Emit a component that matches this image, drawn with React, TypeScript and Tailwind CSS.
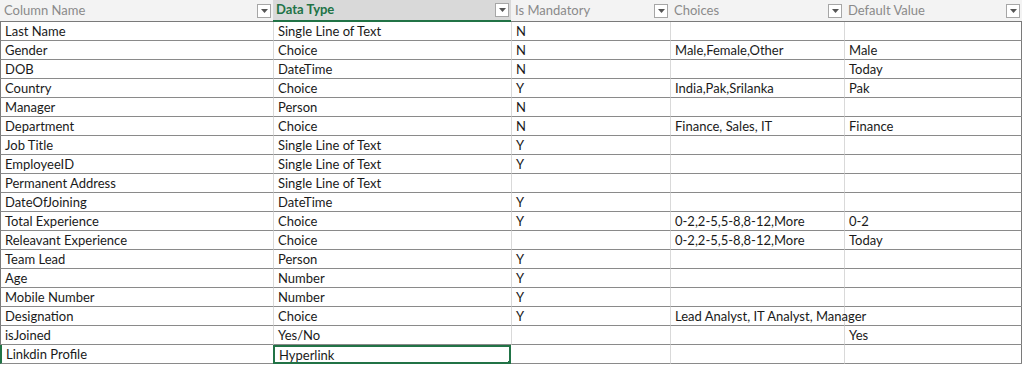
import React from "react";

type Row = [string, string, string, string, string];

const rows: Row[] = [
  ["Last Name", "Single Line of Text", "N", "", ""],
  ["Gender", "Choice", "N", "Male,Female,Other", "Male"],
  ["DOB", "DateTime", "N", "", "Today"],
  ["Country", "Choice", "Y", "India,Pak,Srilanka", "Pak"],
  ["Manager", "Person", "N", "", ""],
  ["Department", "Choice", "N", "Finance, Sales, IT", "Finance"],
  ["Job Title", "Single Line of Text", "Y", "", ""],
  ["EmployeeID", "Single Line of Text", "Y", "", ""],
  ["Permanent Address", "Single Line of Text", "", "", ""],
  ["DateOfJoining", "DateTime", "Y", "", ""],
  ["Total Experience", "Choice", "Y", "0-2,2-5,5-8,8-12,More", "0-2"],
  ["Releavant Experience", "Choice", "", "0-2,2-5,5-8,8-12,More", "Today"],
  ["Team Lead", "Person", "Y", "", ""],
  ["Age", "Number", "Y", "", ""],
  ["Mobile Number", "Number", "Y", "", ""],
  ["Designation", "Choice", "Y", "Lead Analyst, IT Analyst, Manager", ""],
  ["isJoined", "Yes/No", "", "", "Yes"],
  ["Linkdin Profile", "Hyperlink", "", "", ""],
];

const headers = ["Column Name", "Data Type", "Is Mandatory", "Choices", "Default Value"];

function FilterButton() {
  return (
    <span className="ml-auto mr-[2px] flex h-[14px] w-[14px] shrink-0 items-center justify-center border border-[#a6a6a6] bg-white">
      <svg width="7" height="4" viewBox="0 0 7 4">
        <path d="M0 0h7L3.5 4z" fill="#555" />
      </svg>
    </span>
  );
}

export default function App() {
  return (
    <div
      className="h-[365px] w-[1024px] overflow-hidden bg-white text-[13px] text-[#1a1a1a]"
      style={{ fontFamily: "Lato, 'Liberation Sans', sans-serif" }}
    >
      <div className="grid w-[1022px] grid-cols-[273px_238px_159px_174px_178px] border-r border-[#7a7a7a]">
        {headers.map((h, i) => (
          <div
            key={h}
            className={
              i === 1
                ? "flex h-[22px] items-center border-b-2 border-[#217346] bg-[#d9d9d9] pl-[3px] font-bold text-[#217346]"
                : "flex h-[22px] items-center border-b border-[#7a7a7a] bg-[#f3f3f3] pl-[4px] text-[#8a8a8a]"
            }
          >
            <span>{h}</span>
            <FilterButton />
          </div>
        ))}
        {rows.map((r, ri) =>
          r.map((c, ci) => {
            const last = ri === rows.length - 1;
            const selected = last && ci === 1;
            const cls = [
              "relative h-[19px] whitespace-nowrap pl-[4px]",
              selected
                ? "border-2 border-[#217346] pl-[2px] leading-[16px]"
                : "border-b border-[#8a8a8a] leading-[19px]",
              !selected && ci > 0 && !(last && ci === 2) ? "border-l border-l-[#d9d9d9]" : "",
              ci === 0 ? (last ? "border-l-2 border-l-[#217346]" : "border-l border-l-[#7a7a7a]") : "",
              ci === 3 ? "overflow-visible" : "overflow-hidden",
            ].join(" ");
            return (
              <div key={`${ri}-${ci}`} className={cls}>
                <span className={ci === 3 ? "relative z-10" : ""}>{c}</span>
                {selected && (
                  <span className="absolute -bottom-[4px] -right-[4px] h-[6px] w-[6px] border border-white bg-[#217346]" />
                )}
              </div>
            );
          })
        )}
      </div>
    </div>
  );
}
